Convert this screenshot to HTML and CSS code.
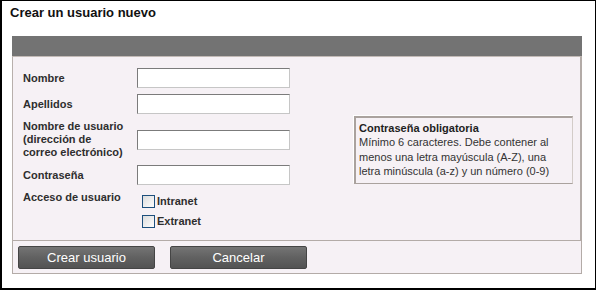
FILE: index.html
```html
<!DOCTYPE html>
<html lang="es">
<head>
<meta charset="utf-8">
<title>Crear un usuario nuevo</title>
<link rel="stylesheet" href="styles.css">
</head>
<body>
<div class="dialog">
  <h1 class="title">Crear un usuario nuevo</h1>
  <div class="panel">
    <div class="panel-head"></div>
    <div class="panel-body">
      <div class="form-grid">
        <label class="lbl" for="f-nombre">Nombre</label>
        <input class="txt" id="f-nombre" type="text">
        <label class="lbl" for="f-apellidos">Apellidos</label>
        <input class="txt" id="f-apellidos" type="text">
        <label class="lbl" for="f-usuario">Nombre de usuario (dirección de correo electrónico)</label>
        <input class="txt" id="f-usuario" type="text">
        <label class="lbl" for="f-pass">Contraseña</label>
        <input class="txt" id="f-pass" type="password">
        <span class="lbl lbl-top">Acceso de usuario</span>
        <div class="checks">
          <label class="chk"><input class="box" type="checkbox"><span>Intranet</span></label>
          <label class="chk"><input class="box" type="checkbox"><span>Extranet</span></label>
        </div>
      </div>
      <div class="note">
        <div class="note-title">Contraseña obligatoria</div>
        <div class="note-text">Mínimo 6 caracteres. Debe contener al menos una letra mayúscula (A-Z), una letra minúscula (a-z) y un número (0-9)</div>
      </div>
    </div>
    <div class="panel-foot">
      <button class="btn" type="button">Crear usuario</button>
      <button class="btn" type="button">Cancelar</button>
    </div>
  </div>
</div>
</body>
</html>
```
FILE: styles.css
```css
html, body {
  margin: 0;
  padding: 0;
  background: #ffffff;
}

.dialog {
  box-sizing: border-box;
  width: 596px;
  height: 290px;
  border-style: solid;
  border-color: #000;
  border-width: 1px 1px 2px 2px;
  padding: 3px 13px 0 8px;
  font-family: "Liberation Sans", Arial, sans-serif;
  background: #fff;
}

.title {
  margin: 0 0 14px 0;
  font-size: 13px;
  line-height: 18px;
  font-weight: bold;
  color: #111;
}

.panel {
  margin-left: 2px;
  width: 570px;
}

.panel-head {
  height: 20px;
  background: #737373;
}

.panel-body {
  display: flex;
  justify-content: space-between;
  align-items: center;
  background: #f6f1f5;
  border-style: solid;
  border-color: #c2bab6 #b3aba7 #b3aba7 #b8b0ac;
  border-width: 1px 2px 1px 1px;
  padding: 11px 7px 9px 10px;
}

.form-grid {
  display: grid;
  grid-template-columns: 114px 153px;
  row-gap: 6px;
  align-items: center;
}

.lbl {
  font-size: 11px;
  line-height: 13px;
  font-weight: bold;
  color: #2e2e2e;
  padding-right: 9px;
}

.lbl-top {
  align-self: start;
}

.txt {
  box-sizing: border-box;
  width: 153px;
  height: 20px;
  margin: 0;
  padding: 1px 3px;
  border-style: solid;
  border-width: 1px;
  border-color: #7b7b7b #c6c6c6 #c6c6c6 #7b7b7b;
  background: #fff;
  font-family: "Liberation Sans", Arial, sans-serif;
  font-size: 11px;
}

.checks {
  display: flex;
  flex-direction: column;
  padding-left: 5px;
}

.chk {
  display: flex;
  align-items: center;
  height: 20px;
  font-size: 11px;
  font-weight: bold;
  color: #2e2e2e;
}

.box {
  appearance: none;
  -webkit-appearance: none;
  box-sizing: border-box;
  width: 13px;
  height: 13px;
  margin: 0 2px 0 0;
  border: 1px solid #1d4f7c;
  background: linear-gradient(135deg, #dcdcdc 0%, #f4f4f4 70%, #fbfbfb 100%);
}

.note {
  box-sizing: border-box;
  width: 219px;
  padding: 3px 4px 4px 3px;
  border-style: solid;
  border-width: 2px 1px 1px 2px;
  border-color: #aaa29e #d3ccc8 #aaa29e #aaa29e;
  box-shadow: -1px -1px 0 #ffffff;
  font-size: 11px;
  line-height: 14.5px;
  color: #333;
}

.note-title {
  font-weight: bold;
  color: #1e1e1e;
}

.panel-foot {
  display: flex;
  gap: 15px;
  background: #f6f1f5;
  border-style: solid;
  border-color: #b3aba7;
  border-width: 0 1px 1px 1px;
  padding: 5px 5px 4px 5px;
}

.btn {
  box-sizing: border-box;
  width: 137px;
  height: 23px;
  margin: 0;
  padding: 0;
  border: 1px solid #454545;
  border-radius: 2px;
  background: linear-gradient(to bottom, #747474 0%, #616161 50%, #535353 100%);
  color: #fff;
  font-family: "Liberation Sans", Arial, sans-serif;
  font-size: 13px;
  line-height: 21px;
  cursor: pointer;
}
```
